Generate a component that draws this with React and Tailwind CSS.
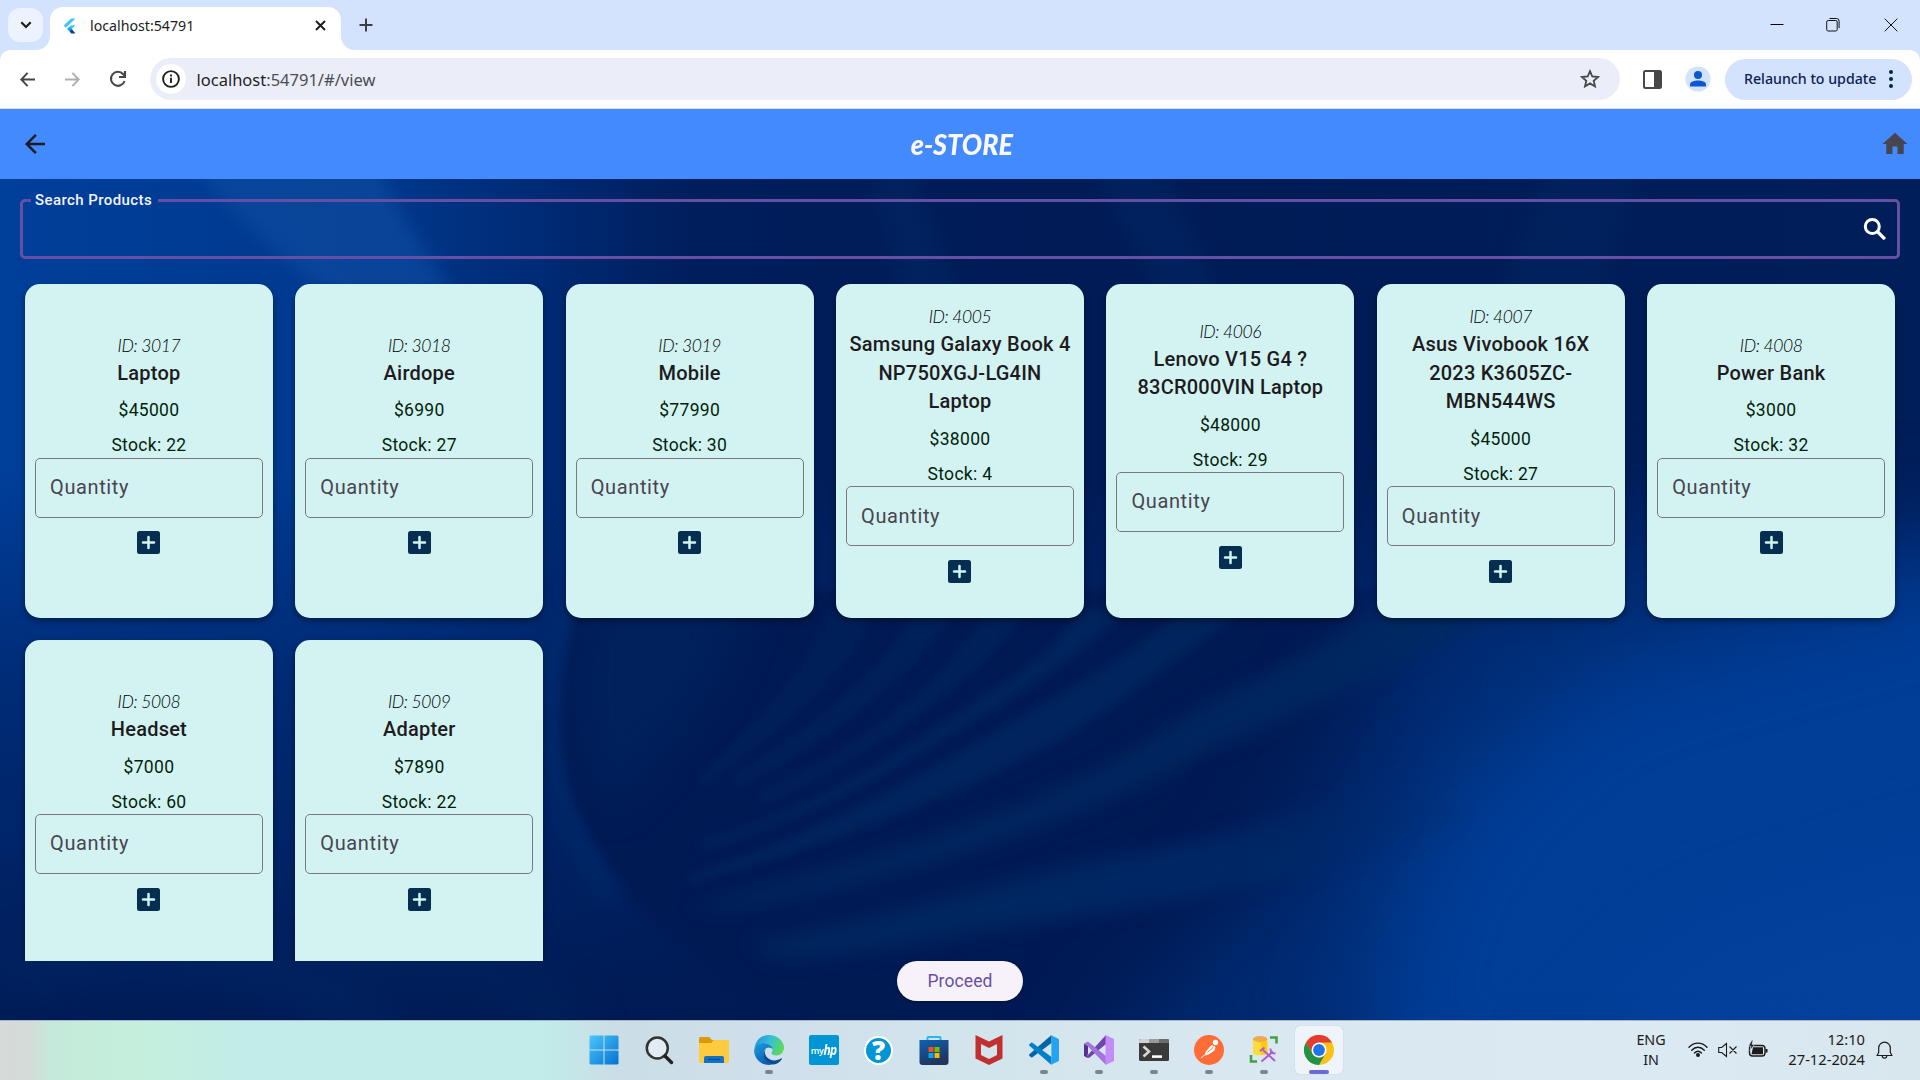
import React from "react";
import { MdArrowBack, MdHome } from "react-icons/md";

const products = [
  { id: 3017, name: ["Laptop"], price: 45000, stock: 22 },
  { id: 3018, name: ["Airdope"], price: 6990, stock: 27 },
  { id: 3019, name: ["Mobile"], price: 77990, stock: 30 },
  { id: 4005, name: ["Samsung Galaxy Book 4", "NP750XGJ-LG4IN", "Laptop"], price: 38000, stock: 4 },
  { id: 4006, name: ["Lenovo V15 G4 ?", "83CR000VIN Laptop"], price: 48000, stock: 29 },
  { id: 4007, name: ["Asus Vivobook 16X", "2023 K3605ZC-", "MBN544WS"], price: 45000, stock: 27 },
  { id: 4008, name: ["Power Bank"], price: 3000, stock: 32 },
  { id: 5008, name: ["Headset"], price: 7000, stock: 60 },
  { id: 5009, name: ["Adapter"], price: 7890, stock: 22 },
];

function FlutterLogo() {
  return (
    <svg width="14" height="16" viewBox="0 0 14 16">
      <path d="M8 .5h4.500L3 9.800.7 7.500z" fill="#42c5f5" />
      <path d="M8 7.200h4.500L8.800 11 6.500 13.200 4.200 11z" fill="#42c5f5" />
      <path d="M4.200 11l2.300-2.300L8.800 11l-2.300 2.300z" fill="#1da6ea" />
      <path d="M6.500 13.300L8.800 11l3.700 4.500H8.200z" fill="#0b3f92" />
    </svg>
  );
}

function TabStrip() {
  return (
    <div className="flex h-[50px] w-full items-start bg-[#d3e2fd]">
      <button className="mt-2 ml-2 flex h-[34px] w-[35px] items-center justify-center rounded-xl bg-[#ecf2fe]">
        <svg width="12" height="8" viewBox="0 0 12 8" fill="none" stroke="#1c1c1c" strokeWidth="2.2">
          <path d="M1.3 1.3L6 6l4.7-4.7" />
        </svg>
      </button>
      <svg className="mt-[36px] -ml-[7px]" width="14" height="14" viewBox="0 0 14 14">
        <path d="M14 0v14H0C8 14 14 8 14 0z" fill="#fff" />
      </svg>
      <div className="mt-[7px] flex h-[43px] w-[290.5px] items-center rounded-t-[13px] bg-white pb-[6px] pl-[13px]">
        <FlutterLogo />
        <span className="ml-[13px] flex-1 font-['Noto_Sans'] text-[14.2px] leading-5 text-[#1c1c1c]">localhost:54791</span>
        <svg className="mr-[15px]" width="11" height="11" viewBox="0 0 11 11" stroke="#1c1c1c" strokeWidth="1.9">
          <path d="M1 1l9 9M10 1l-9 9" />
        </svg>
      </div>
      <svg className="mt-[36px]" width="14" height="14" viewBox="0 0 14 14">
        <path d="M0 0v14h14C6 14 0 8 0 0z" fill="#fff" />
      </svg>
      <svg className="mt-[18px] ml-[4px]" width="14" height="14" viewBox="0 0 14 14" stroke="#3c4043" strokeWidth="2">
        <path d="M7 .5v13M.5 7h13" />
      </svg>
      <div className="flex-1" />
      <svg className="mt-[17px] mr-[42px]" width="14" height="14" viewBox="0 0 14 14" stroke="#000" strokeWidth="1">
        <path d="M.5 7.5h13" />
      </svg>
      <svg className="mt-[18px] mr-[44px]" width="14" height="14" viewBox="0 0 14 14" fill="none" stroke="#111" strokeWidth="1">
        <rect x=".7" y="2.5" width="10.5" height="10.5" rx="1.5" />
        <path d="M3.5.5h7a2.6 2.6 0 0 1 2.6 2.6v7" />
      </svg>
      <svg className="mt-[18px] mr-[22px]" width="14" height="14" viewBox="0 0 14 14" stroke="#111" strokeWidth="1">
        <path d="M.7.7l12.6 12.6M13.3.7L.7 13.3" />
      </svg>
    </div>
  );
}

function Toolbar() {
  return (
    <div className="bg-[#d3e2fd]">
      <div className="flex h-[59px] w-full items-center rounded-t-[10px] border-b border-[#d9dbe0] bg-white pl-5">
        <svg width="15" height="15" viewBox="0 0 15 15" fill="none" stroke="#474747" strokeWidth="2">
          <path d="M7.6 .9L1.3 7.5l6.3 6.6M1.3 7.5H15" />
        </svg>
        <svg className="ml-[30px]" width="15" height="15" viewBox="0 0 15 15" fill="none" stroke="#b0b0b0" strokeWidth="2">
          <path d="M7.4 .9l6.3 6.6-6.3 6.6M13.7 7.5H0" />
        </svg>
        <svg className="ml-[29px]" width="18" height="18" viewBox="0 0 18 18" fill="none" stroke="#474747" strokeWidth="2.1">
          <path d="M15.600 11A7 7 0 1 1 14.300 4.300L16 6" />
          <path d="M16 1v6h-6" />
        </svg>
        <div className="ml-[23px] flex h-[42px] w-[1470px] items-center rounded-full bg-[#ebeef8] pl-[6px]">
          <span className="flex size-[30px] items-center justify-center rounded-full bg-white">
            <svg width="18" height="18" viewBox="0 0 18 18" fill="none" stroke="#1f1f1f" strokeWidth="1.9">
              <circle cx="9" cy="9" r="7.9" />
              <path d="M9 7.8v5.200M9 4.600v2" />
            </svg>
          </span>
          <span className="ml-[10.5px] flex-1 pt-[1px] font-['Noto_Sans'] text-[16.5px] leading-6 text-[#4b4d52]">
            <span className="text-[#1f1f1f]">localhost</span>:54791/#/view
          </span>
          <svg className="mr-5" width="20" height="20" viewBox="0 0 20 20" fill="none" stroke="#474747" strokeWidth="1.8">
            <path d="M10 2.200l2.300 5.300 5.800.5-4.400 3.800 1.300 5.600-5-3-5 3 1.300-5.600L1.900 8l5.800-.5z" />
          </svg>
        </div>
        <svg className="ml-[23px]" width="19" height="19" viewBox="0 0 19 19">
          <rect x="1" y="1" width="17" height="17" rx="1.500" fill="none" stroke="#474747" strokeWidth="2" />
          <path d="M11 1h7v17h-7z" fill="#474747" />
        </svg>
        <svg className="ml-[22.5px] -mt-[1px]" width="26" height="26" viewBox="0 0 26 26">
          <circle cx="13" cy="13" r="12.600" fill="#d3e2fd" />
          <circle cx="13" cy="9" r="4" fill="#0b57d0" />
          <path d="M5 20.500v-2c0-3 4.500-4 8-4s8 1 8 4v2z" fill="#0b57d0" />
        </svg>
        <button className="ml-[14.5px] flex h-[41px] w-[187px] items-center rounded-full bg-[#d3e2fd] pl-[19px]">
          <span className="w-[138px] text-left font-['Noto_Sans'] text-[14.2px] font-medium whitespace-nowrap text-[#0a2250]">Relaunch to update</span>
          <svg className="ml-[7px]" width="4" height="18" viewBox="0 0 4 18" fill="#0a2250">
            <circle cx="2" cy="2" r="2" />
            <circle cx="2" cy="9" r="2" />
            <circle cx="2" cy="16" r="2" />
          </svg>
        </button>
      </div>
    </div>
  );
}

function Wallpaper() {
  return (
    <svg className="absolute inset-0 -z-10 h-full w-full" viewBox="0 179 1920 841" preserveAspectRatio="none">
      <defs>
        <linearGradient id="base" x1="0" y1="0" x2="1" y2="0">
          <stop offset="0" stopColor="#003f9a" />
          <stop offset=".19" stopColor="#00398e" />
          <stop offset=".27" stopColor="#002c78" />
          <stop offset=".36" stopColor="#001e5c" />
          <stop offset=".55" stopColor="#001b56" />
          <stop offset="1" stopColor="#001e5a" />
        </linearGradient>
        <linearGradient id="fade" x1="0" y1="0" x2="0" y2="1">
          <stop offset=".35" stopColor="#00256a" stopOpacity="0" />
          <stop offset=".6" stopColor="#00256a" stopOpacity=".75" />
          <stop offset="1" stopColor="#001a53" stopOpacity=".95" />
        </linearGradient>
        <linearGradient id="streak" gradientUnits="userSpaceOnUse" x1="240" y1="1000" x2="1050" y2="500">
          <stop offset="0" stopColor="#002960" />
          <stop offset=".6" stopColor="#002b68" />
          <stop offset="1" stopColor="#002b6c" stopOpacity="0" />
        </linearGradient>
        <filter id="b5" x="-20%" y="-20%" width="140%" height="140%" colorInterpolationFilters="sRGB"><feGaussianBlur stdDeviation="4.500" /></filter>
        <filter id="b9" x="-20%" y="-30%" width="140%" height="160%" colorInterpolationFilters="sRGB"><feGaussianBlur stdDeviation="9" /></filter>
        <filter id="b20" x="-30%" y="-50%" width="160%" height="200%" colorInterpolationFilters="sRGB"><feGaussianBlur stdDeviation="20" /></filter>
        <filter id="b45" x="-40%" y="-60%" width="180%" height="220%" colorInterpolationFilters="sRGB"><feGaussianBlur stdDeviation="50" /></filter>
      </defs>
      <rect y="179" width="1920" height="841" fill="url(#base)" />
      <path d="M190 160h190c10 50 60 100 100 190h-90C340 300 250 240 190 160z" fill="#0d4a9e" opacity=".7" filter="url(#b9)" />
      <rect y="179" width="1920" height="841" fill="url(#fade)" />
      <path d="M870 165h40l50 130h-60zM1090 165h70l60 130h-60z" fill="#002662" opacity=".6" filter="url(#b9)" />
      <path d="M1550 165h90l-40 130h-100z" fill="#00235e" opacity=".8" filter="url(#b9)" />
      <path d="M572 600C528 700 552 810 612 900" stroke="#002e6c" strokeWidth="22" fill="none" opacity=".5" filter="url(#b9)" />
      <path d="M584 590C550 693 556 780 592 837C640 910 650 943 830 1040H1900V590z" fill="#001a54" filter="url(#b5)" />
      <path d="M590 590h160c-20 90-70 150-140 220-40-70-45-130-20-220z" fill="#00235e" opacity=".8" filter="url(#b20)" />
      <path d="M1080 1080L1270 890 1370 720 1410 540H2050v540z" fill="#002c74" filter="url(#b45)" />
      <path d="M1350 1100L1400 890 1464 780 1596 670 1850 600 2080 540v560z" fill="#003e98" filter="url(#b45)" />
      <path d="M1560 1080L1700 950 2000 860v220z" fill="#0643a0" opacity=".7" filter="url(#b45)" />
      <g filter="url(#b9)">
        <g transform="translate(540 610) scale(.88 .33333)">
          <path d="M170 890C400 740 600 560 700 380C800 200 900 120 960 -20L1120 -20C950 200 850 330 760 420C640 600 400 830 220 890z" fill="#002962" opacity=".8" />
          <path d="M240 1000C400 920 560 780 700 720C850 640 900 550 1000 480L1050 620C900 780 800 850 560 940C450 980 330 1060 260 1040z" fill="url(#streak)" opacity=".8" />
        </g>
      </g>
      <g filter="url(#b5)">
        <g transform="translate(540 610) scale(.88 .33333)" fill="#00245d">
          <path d="M170 800C350 640 470 430 560 300C640 180 690 90 730 0L800 0C720 150 640 330 560 430C440 600 300 720 170 820z" />
          <path d="M190 690C350 560 450 350 520 230C570 150 590 90 615 0L665 0C600 180 500 320 430 430C350 560 280 640 180 720z" />
          <path d="M250 550C380 400 460 200 510 0L552 0C500 200 400 400 250 590z" opacity=".7" />
          <path d="M220 500C340 300 400 150 425 0L472 0C420 200 350 350 220 540z" opacity=".6" />
          <path d="M180 500C260 300 310 150 330 0L380 0C350 200 280 350 180 540z" opacity=".5" />
        </g>
      </g>
      <g fill="none" filter="url(#b20)">
        <path d="M0 975C120 930 240 940 400 1040" stroke="#002866" strokeWidth="26" opacity=".7" />
        <path d="M330 965C420 945 500 965 580 1030" stroke="#00255e" strokeWidth="26" opacity=".7" />
      </g>
    </svg>
  );
}

function ProductCard({ product }) {
  return (
    <article className="flex h-[333.7px] flex-col items-center justify-center rounded-[15px] bg-[#d3f3f2] px-[10px] font-['Roboto'] tracking-[0.31px] shadow-[0_3px_6px_rgba(0,0,0,0.4)]">
      <p className="pb-[2px] font-['Lato'] text-[17.5px] leading-[23px] font-light tracking-[-0.4px] text-black italic">ID: {product.id}</p>
      <h2 className="text-center text-[20px] leading-[28.5px] font-medium tracking-[0.22px] whitespace-nowrap text-[#1d1b20]">
        {product.name.map((line) => (
          <span key={line} className="block">{line}</span>
        ))}
      </h2>
      <p className="mt-[11px] text-[17.5px] leading-[25px] text-[#031f0c]">${product.price}</p>
      <p className="mt-[11px] text-[17.5px] leading-[23.5px] text-[#031f0c]">Stock: {product.stock}</p>
      <div className="flex h-[60px] w-full shrink-0 items-center rounded-[5px] border-[1.25px] border-[#7b7881] pb-[1.5px] pl-[14px] text-[20px] tracking-[0.62px] text-[#49454f]">
        Quantity
      </div>
      <button className="flex h-[50px] w-[50px] shrink-0 items-center justify-center">
        <svg width="23" height="23" viewBox="0 0 23 23">
          <rect width="23" height="23" rx="2.500" fill="#052e50" />
          <path d="M11.500 6v11M6 11.500h11" stroke="#d3f3f2" strokeWidth="2.500" strokeLinecap="round" />
        </svg>
      </button>
    </article>
  );
}

function Store() {
  return (
    <div className="flex h-[911px] flex-col">
      <header className="flex h-[70px] shrink-0 items-center justify-between bg-[#448aff] pr-[10px] pl-5">
        <MdArrowBack size={30} color="#1d1b20" />
        <h1 className="mr-[7px] scale-x-[0.93] pb-[2px] font-['Lato'] text-[29px] leading-none font-black text-[#fbf8ff] italic">e-STORE</h1>
        <MdHome size={30} color="#49454f" />
      </header>
      <main className="relative isolate flex flex-1 flex-col overflow-hidden">
        <Wallpaper />
        <fieldset className="mx-5 mt-5 h-[60px] shrink-0 rounded-[5px] border-[3px] border-[#654fa4]">
          <legend className="ml-[8px] h-[3px] pr-[6px] pl-[4px] font-['Roboto'] text-[15px] leading-[3px] font-medium tracking-[0.42px] text-[#f3f3fb]">Search Products</legend>
          <div className="flex h-[54px] items-center justify-end pr-[10px]">
            <svg width="25" height="25" viewBox="0 0 25 25" fill="none" stroke="#fff">
              <circle cx="10.300" cy="9.500" r="7" strokeWidth="3" />
              <path d="M15.300 14.500l7.600 7.600" strokeWidth="3.300" />
            </svg>
          </div>
        </fieldset>
        <section className="mt-[7px] grid h-[695px] shrink-0 grid-cols-7 content-start gap-[22.5px] overflow-hidden px-[25px] pt-[18px]">
          {products.map((p) => (
            <ProductCard key={p.id} product={p} />
          ))}
        </section>
        <button className="mx-auto h-10 w-[126px] shrink-0 rounded-full bg-[#f7f2fa] font-['Roboto'] text-[17.5px] tracking-[0.12px] text-[#6750a4] shadow-[0_1px_3px_rgba(0,0,0,0.4)]">
          Proceed
        </button>
      </main>
    </div>
  );
}

const StartIcon = () => (
  <svg width="30" height="30" viewBox="0 0 30 30">
    <defs>
      <linearGradient id="win" gradientUnits="userSpaceOnUse" x1="0" y1="0" x2="30" y2="30">
        <stop offset="0" stopColor="#4cc8fb" />
        <stop offset="1" stopColor="#0470d0" />
      </linearGradient>
    </defs>
    <path d="M1.500.5H14.500V14.500H.5V1.500zM15.500.5H28.500l1 1V14.500h-14zM.5 15.500H14.500v14H1.500l-1-1zM15.500 15.500h14v13l-1 1h-13z" fill="url(#win)" />
  </svg>
);
const SearchIcon = () => (
  <svg width="30" height="30" viewBox="0 0 30 30">
    <circle cx="13.300" cy="13" r="10.500" fill="#e3ecf2" stroke="#333" strokeWidth="2.500" />
    <path d="M21 21l6.500 6.500" stroke="#222" strokeWidth="3.400" strokeLinecap="round" />
  </svg>
);
const FolderIcon = () => (
  <svg width="30" height="30" viewBox="0 0 30 30">
    <path d="M0 3.500Q0 2 1.500 2H10l3 3h15.500Q30 5 30 6.500V12H0z" fill="#dc9a08" />
    <path d="M0 8h12l3-3h13.500Q30 5 30 6.500v20Q30 28 28.500 28h-27Q0 28 0 26.500z" fill="#fecb3e" />
    <path d="M5 28v-5q0-2 2-2h16q2 0 2 2v5z" fill="#1273c4" />
    <path d="M9 24.500h12" stroke="#0a4a86" strokeWidth="1.200" />
  </svg>
);
const EdgeIcon = () => (
  <svg width="30" height="30" viewBox="0 0 30 30">
    <defs>
      <linearGradient id="edgeTop" x1="0" y1=".3" x2="1" y2=".6">
        <stop offset="0" stopColor="#2296dc" />
        <stop offset=".5" stopColor="#35c1d5" />
        <stop offset="1" stopColor="#5fdc50" />
      </linearGradient>
      <linearGradient id="edgeLeft" x1="0" y1="0" x2=".6" y2="1">
        <stop offset="0" stopColor="#1b9de2" />
        <stop offset="1" stopColor="#0b5cb0" />
      </linearGradient>
    </defs>
    <path d="M.5 14C1 6 7 0 15 0s15 6 15 12.500c0 5-3.500 8-7.500 8-3 0-5-1-5-2.500 0-.8 1-1.400 1-3.200C18.500 11 14.500 8 9.500 8 5 8 2 10.500.5 14z" fill="url(#edgeTop)" />
    <path d="M.2 15C1.200 10.500 4.500 8 9.500 8c5 0 9 3 9 6.500-1-2-6-3.500-8 1-2.500 6 1.500 12 7 13.800C16 30 15.500 30 15 30 6.500 30-.3 23 .2 15z" fill="url(#edgeLeft)" />
    <path d="M12 14c-2.500 4-.500 8.500 4 10.500 4 1.800 8.500.5 11-1 .8-.4 1.200.2.800.8C25.500 28 21 30 17.500 29.500 10.500 27.500 7 20 12 14z" fill="#0d4b93" />
  </svg>
);
const MyHpIcon = () => (
  <span className="flex size-[30px] items-center justify-center rounded-[2px] bg-[#0096d6] font-['Open_Sans'] leading-none text-white">
    <span className="text-[9px] font-semibold tracking-[-0.3px]">my</span>
    <span className="scale-y-125 text-[12px] font-bold tracking-[-0.9px] italic">hp</span>
  </span>
);
const HelpIcon = () => (
  <span className="flex size-[29px] items-center justify-center rounded-full border-2 border-white bg-[#0096d6] font-['Open_Sans'] text-[26px] leading-none font-extrabold text-white">?</span>
);
const StoreIcon = () => (
  <svg width="30" height="30" viewBox="0 0 30 30">
    <defs>
      <linearGradient id="bag" x1="0" y1="0" x2=".4" y2="1">
        <stop offset="0" stopColor="#0f62b4" />
        <stop offset="1" stopColor="#20345c" />
      </linearGradient>
    </defs>
    <path d="M8.500 6V3Q8.500 2 9.500 2h11q1 0 1 1v3" fill="none" stroke="#27b7f2" strokeWidth="2" />
    <path d="M.5 5h29v22q0 3-3 3h-23q-3 0-3-3z" fill="url(#bag)" />
    <path d="M9.500 12h5v5h-5z" fill="#f25022" />
    <path d="M15.500 12h5v5h-5z" fill="#7fba00" />
    <path d="M9.500 18h5v5h-5z" fill="#00a4ef" />
    <path d="M15.500 18h5v5h-5z" fill="#ffb900" />
  </svg>
);
const McAfeeIcon = () => (
  <svg width="30" height="30" viewBox="0 0 30 30">
    <path d="M1.500 0L15 6.500 28.500 0v23.500L15 30 1.500 23.500zM7 9v11l8 4 8-4V9l-8 4z" fill="#c22f30" fillRule="evenodd" />
  </svg>
);
const VsCodeIcon = () => (
  <svg width="30" height="30" viewBox="0 0 30 30">
    <path d="M.4 19.300Q-.3 20 .4 20.700L2 22.200q.7.500 1.400 0L22.500 8V0z" fill="#0065a9" />
    <path d="M.4 10.700Q-.3 10 .4 9.300L2 7.800q.7-.5 1.400 0L22.500 22v8z" fill="#0080cc" />
    <path d="M21.500 0L29 3.500q1 .5 1 1.500v20q0 1-1 1.500L21.500 30q.9-.4.900-1.600V1.600Q22.400.4 21.500 0z" fill="#24a3ef" />
  </svg>
);
const VisualStudioIcon = () => (
  <svg width="30" height="30" viewBox="0 0 30 30">
    <path d="M0 9l3.500-2v16L0 21z" fill="#52318f" />
    <path d="M0 21V9l4 2v8z" fill="#52318f" />
    <path d="M2 22L22 0v9L5 23z" fill="#6f45a8" />
    <path d="M0 9l4-2.500L22 21v9L3.500 11z" fill="#a374dd" />
    <path d="M21.500 0L30 4v22l-8.500 4z" fill="#c58bf8" />
  </svg>
);
const TerminalIcon = () => (
  <svg width="30" height="30" viewBox="0 0 30 30">
    <rect y="4" width="30" height="22" rx="1.500" fill="#3a3a3a" />
    <path d="M0 8V5.500Q0 4 1.500 4H10v4z" fill="#d0d0d0" />
    <path d="M10 4h10v4H10z" fill="#9a9a9a" />
    <path d="M20 4h8.500Q30 4 30 5.500V8H20z" fill="#6c6c6c" />
    <path d="M4.500 11.500l5.500 5-5.500 5" stroke="#d6d6d6" strokeWidth="2.600" fill="none" />
    <path d="M13 21.600h10" stroke="#fff" strokeWidth="2.600" />
  </svg>
);
const PostmanIcon = () => (
  <svg width="30" height="30" viewBox="0 0 30 30">
    <circle cx="15" cy="15" r="15" fill="#ff6c37" />
    <circle cx="21.500" cy="7.500" r="2.700" fill="#fff" />
    <path d="M17.500 10.500l3.500 1.500-1 3.500-5.500 3.500-3 1 .5-3zM13 18l-6 5" fill="#fff" stroke="#fff" strokeWidth="1" />
    <path d="M13.500 17.500l6-5.500" stroke="#ff6c37" strokeWidth=".9" />
  </svg>
);
const DatabaseToolsIcon = () => (
  <svg width="30" height="30" viewBox="0 0 30 30">
    <path d="M4 4v14c0 3 14 3 14 0V4z" fill="#fddc3a" />
    <path d="M12 6h6.500v12q-2 2-6.500 2z" fill="#ffcb08" />
    <ellipse cx="11.200" cy="4" rx="7.300" ry="3" fill="#f0a94b" />
    <path d="M21 2.500h6.500V8.500M8 26.500H2V20" fill="none" stroke="#43a047" strokeWidth="2.600" />
    <path d="M13.500 14.500L26 26M24 16.500L12.500 26.500M11 16l4.500-3.500M21.500 13.500l.5 4.500 4.500.5" fill="none" stroke="#ae5bd0" strokeWidth="1.900" />
  </svg>
);
const ChromeIcon = () => (
  <svg width="30" height="30" viewBox="0 0 30 30">
    <circle cx="15" cy="15" r="15" fill="#fbc116" />
    <path d="M2 7.500A15 15 0 0 1 28 7.500H15L8.500 18.700z" fill="#e33b2e" />
    <path d="M2 7.500L8.500 18.700A7.500 7.500 0 0 0 21.500 18.700L15 30A15 15 0 0 1 2 7.500z" fill="#219347" />
    <circle cx="15" cy="15" r="7.500" fill="#fff" />
    <circle cx="15" cy="15" r="5.900" fill="#1f75e8" />
  </svg>
);

const apps = [
  { name: "start", Icon: StartIcon },
  { name: "search", Icon: SearchIcon },
  { name: "files", Icon: FolderIcon },
  { name: "edge", Icon: EdgeIcon, running: true },
  { name: "myhp", Icon: MyHpIcon },
  { name: "help", Icon: HelpIcon },
  { name: "store", Icon: StoreIcon },
  { name: "mcafee", Icon: McAfeeIcon },
  { name: "vscode", Icon: VsCodeIcon, running: true },
  { name: "vs", Icon: VisualStudioIcon, running: true },
  { name: "terminal", Icon: TerminalIcon, running: true },
  { name: "postman", Icon: PostmanIcon, running: true },
  { name: "dbtools", Icon: DatabaseToolsIcon, running: true },
  { name: "chrome", Icon: ChromeIcon, active: true },
];

function Taskbar() {
  return (
    <footer className="flex h-[60px] w-full items-start border-t border-[#a9b4c4] bg-[linear-gradient(90deg,#d6dad9_0px,#d4dbd8_28px,#c5e9da_50px,#c5efdc_130px,#c1ecea_250px,#c0ece9_540px,#cbdde6_620px,#cfe0ec_780px,#d3e5ec_1000px,#dae8f1_1300px,#dbe9f2_1700px,#d8e6ee_1920px)]">
      <div className="ml-[576px] flex">
        {apps.map(({ name, Icon, running, active }) => (
          <div key={name} className="flex h-[59px] w-[55px] justify-center pt-[5px]">
            <div className={active ? "flex h-[48px] w-[48px] flex-col items-center rounded-[5px] bg-[#eef4f9] pt-[9px] shadow-[0_0_1px_rgba(0,0,0,0.25)]" : "flex h-[48px] w-[48px] flex-col items-center pt-[9px]"}>
              <div className="flex h-[30px] items-center"><Icon /></div>
              {running && <span className="mt-[5px] h-1 w-2 shrink-0 rounded-full bg-[#7c858b]" />}
              {active && <span className="mt-[5px] h-1 w-5 shrink-0 rounded-full bg-[#6b69d6]" />}
            </div>
          </div>
        ))}
      </div>
      <div className="flex flex-1 items-start font-['Noto_Sans'] text-[14.3px] leading-5 text-[#1b1b1b]">
        <div className="mt-[9px] ml-[290px] w-[30px] text-center">
          <div>ENG</div>
          <div>IN</div>
        </div>
        <svg className="mt-[20px] ml-[22px]" width="20" height="18" viewBox="0 0 20 18" fill="none" stroke="#1b1b1b" strokeWidth="1.400" strokeLinecap="round">
          <path d="M1 6.200C6 .7 14 .7 19 6.200M3.700 9.200C7.500 5.200 12.500 5.200 16.300 9.200M6.500 12C8.700 9.800 11.300 9.800 13.500 12" />
          <circle cx="10" cy="14" r="1.300" fill="#1b1b1b" />
        </svg>
        <svg className="mt-[20px] ml-[10px]" width="20" height="18" viewBox="0 0 20 18" fill="none" stroke="#1b1b1b" strokeWidth="1.100">
          <path d="M.7 6.500h3L8.500 2.500v13L3.700 11.500h-3zM11.500 5.500l7 7M18.500 5.500l-7 7" />
        </svg>
        <svg className="mt-[19px] ml-[10px]" width="20" height="18" viewBox="0 0 20 18">
          <rect x="1.500" y="5.500" width="15.500" height="10.500" rx="3" fill="none" stroke="#1b1b1b" strokeWidth="1.400" />
          <path d="M3.500 14.200L5 7.300H15v6.900zM17.500 9h2v3.500h-2z" fill="#1b1b1b" />
          <path d="M4 0L.5 6H3L2 10.500 6.500 4.500H4L5 0z" fill="#1b1b1b" stroke="#dbe9f2" strokeWidth=".6" />
        </svg>
        <div className="mt-[8px] ml-[17px] w-[80px] text-right text-[14.700px] whitespace-nowrap">
          <div>12:10</div>
          <div>27-12-2024</div>
        </div>
        <svg className="mt-[20px] ml-[11px]" width="17" height="19" viewBox="0 0 17 19" fill="none" stroke="#1b1b1b" strokeWidth="1.200">
          <path d="M1 14.500l1.700-3V7a5.800 5.800 0 0 1 11.600 0v4.500l1.700 3z" strokeLinejoin="round" />
          <path d="M6.300 15a2.200 2.200 0 0 0 4.400 0" />
        </svg>
      </div>
    </footer>
  );
}

export default function App() {
  return (
    <div className="flex h-[1080px] w-[1920px] flex-col overflow-hidden bg-white">
      <TabStrip />
      <Toolbar />
      <Store />
      <Taskbar />
    </div>
  );
}
